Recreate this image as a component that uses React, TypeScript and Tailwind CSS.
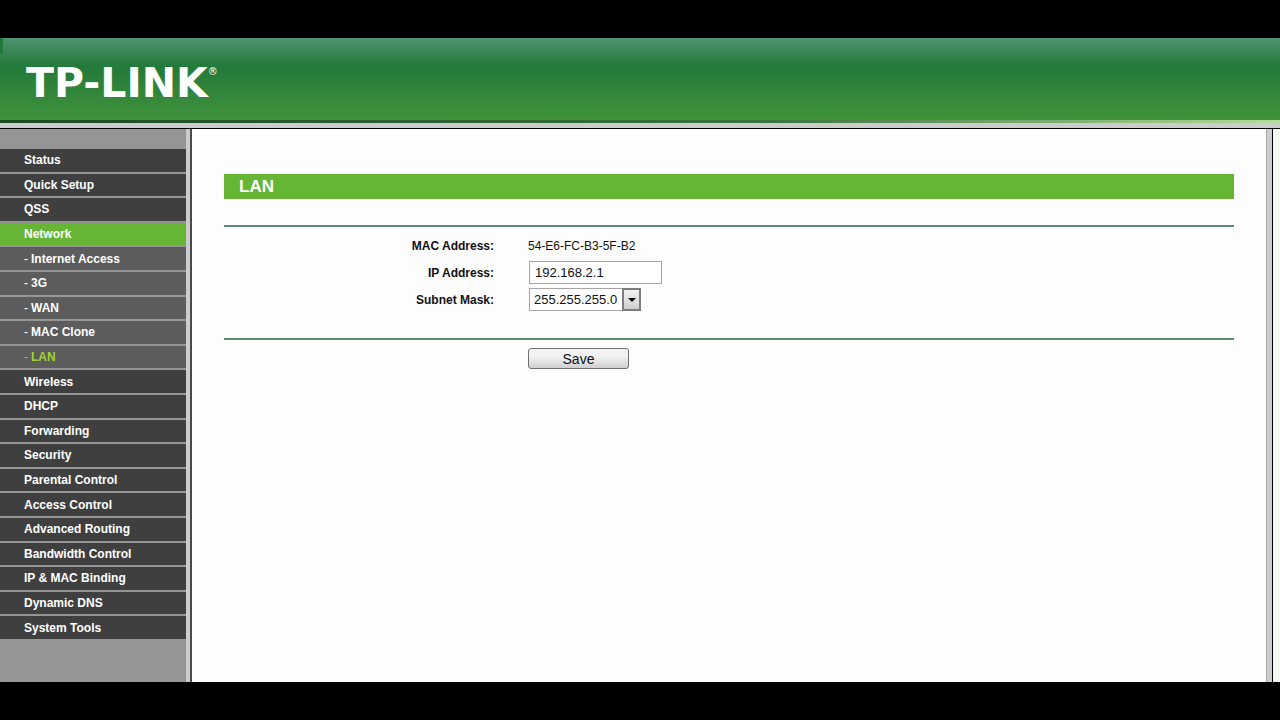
import { useState } from 'react';

type MenuItem = {
  label: string;
  sub?: boolean;
};

const menu: MenuItem[] = [
  { label: 'Status' },
  { label: 'Quick Setup' },
  { label: 'QSS' },
  { label: 'Network' },
  { label: 'Internet Access', sub: true },
  { label: '3G', sub: true },
  { label: 'WAN', sub: true },
  { label: 'MAC Clone', sub: true },
  { label: 'LAN', sub: true },
  { label: 'Wireless' },
  { label: 'DHCP' },
  { label: 'Forwarding' },
  { label: 'Security' },
  { label: 'Parental Control' },
  { label: 'Access Control' },
  { label: 'Advanced Routing' },
  { label: 'Bandwidth Control' },
  { label: 'IP & MAC Binding' },
  { label: 'Dynamic DNS' },
  { label: 'System Tools' },
];

function Header() {
  return (
    <header>
      <div className="flex h-[82px] bg-linear-to-b from-[#4f9270] via-[#227a3a] via-35% to-[#41933a]">
        <div className="h-4 w-[3px] bg-[#227a3a]" />
        <a
          href="#home"
          className="flex items-start self-center pt-2 pl-[23px] font-['DejaVu_Sans',sans-serif] text-[41px] leading-none font-bold text-white"
        >
          TP-LINK
          <span className="pt-1 text-[10px] leading-none font-normal">®</span>
        </a>
      </div>
      <div className="h-[3px] bg-linear-to-r from-[#1d4a22] via-[#3a7440] via-60% to-[#b5dc9a]" />
      <div className="h-[5px] bg-[#cccccc]" />
      <div className="h-px bg-black" />
    </header>
  );
}

function Sidebar() {
  return (
    <nav className="flex w-[192px] shrink-0 border-r-2 border-[#4a4a4a] bg-[#959595]">
      <ul className="grid flex-1 auto-rows-fr gap-y-[2px] pt-5 pb-[43px]">
        {menu.map((item) => {
          const open = item.label === 'Network';
          const current = item.label === 'LAN';
          return (
            <li
              key={item.label}
              className={open ? 'bg-[#66b534]' : item.sub ? 'bg-[#5c5c5c]' : 'bg-[#3f3f3f]'}
            >
              <a
                href={`#${item.label}`}
                className={`flex h-full items-center gap-[3px] pl-6 text-[12px] leading-4 font-bold ${
                  current ? 'text-[#a0d62c]' : 'text-white'
                }`}
              >
                {item.sub && <span className="font-normal">-</span>}
                {item.label}
              </a>
            </li>
          );
        })}
      </ul>
      <div className="w-1 bg-[#cccccc]" />
    </nav>
  );
}

function LanForm() {
  const [ip, setIp] = useState('192.168.2.1');
  const [mask, setMask] = useState('255.255.255.0');

  return (
    <form className="flex-1 bg-[#fdfdfd] pt-[45px] pr-8 pl-8" onSubmit={(e) => e.preventDefault()}>
      <h1 className="bg-[#66b534] pl-[15px] text-[17px] leading-[25px] font-bold text-white">LAN</h1>

      <div className="mt-[26px] grid grid-cols-[270px_1fr] items-center gap-x-[34px] gap-y-1 border-y-2 border-[#5b8a72] pt-2 pb-[27px] text-[12px]">
        <span className="text-right leading-[22px] font-bold">MAC Address:</span>
        <span className="leading-[22px]">54-E6-FC-B3-5F-B2</span>

        <label htmlFor="ip" className="text-right font-bold">
          IP Address:
        </label>
        <input
          id="ip"
          type="text"
          value={ip}
          onChange={(e) => setIp(e.target.value)}
          className="ml-px h-[23px] w-[133px] border border-[#a5a5a5] bg-white px-[5px] text-[13px]"
        />

        <label htmlFor="mask" className="text-right font-bold">
          Subnet Mask:
        </label>
        <div className="relative ml-px h-[23px] w-[112px]">
          <select
            id="mask"
            value={mask}
            onChange={(e) => setMask(e.target.value)}
            className="h-full w-full appearance-none border border-[#a5a5a5] bg-white pl-1 text-[13px]"
          >
            <option>255.255.255.0</option>
            <option>255.255.0.0</option>
            <option>255.0.0.0</option>
          </select>
          <span className="pointer-events-none absolute top-0 right-0 flex h-full w-[19px] items-center justify-center border-2 border-[#7d7d7d] bg-linear-to-b from-[#f2f2f2] to-[#cfcfcf]">
            <svg width="8" height="4" viewBox="0 0 8 4" aria-hidden="true">
              <path d="M0 0h8L4 4z" fill="#000" />
            </svg>
          </span>
        </div>
      </div>

      <button
        type="submit"
        className="mt-2 ml-[304px] h-[21px] w-[101px] rounded-[3px] border border-[#707070] bg-linear-to-b from-[#f2f2f2] from-40% to-[#cfcfcf] text-[14px] leading-none"
      >
        Save
      </button>
    </form>
  );
}

export default function App() {
  return (
    <div className="flex min-h-screen flex-col bg-black py-[38px] font-['Liberation_Sans',Arial,sans-serif] text-[#111111]">
      <Header />
      <div className="flex flex-1">
        <Sidebar />
        <LanForm />
        <div className="w-[6px] border-l border-[#a8a8a8] bg-[#cccccc]" />
        <div className="w-2 border-l border-black bg-[#f4faf0]" />
      </div>
    </div>
  );
}
